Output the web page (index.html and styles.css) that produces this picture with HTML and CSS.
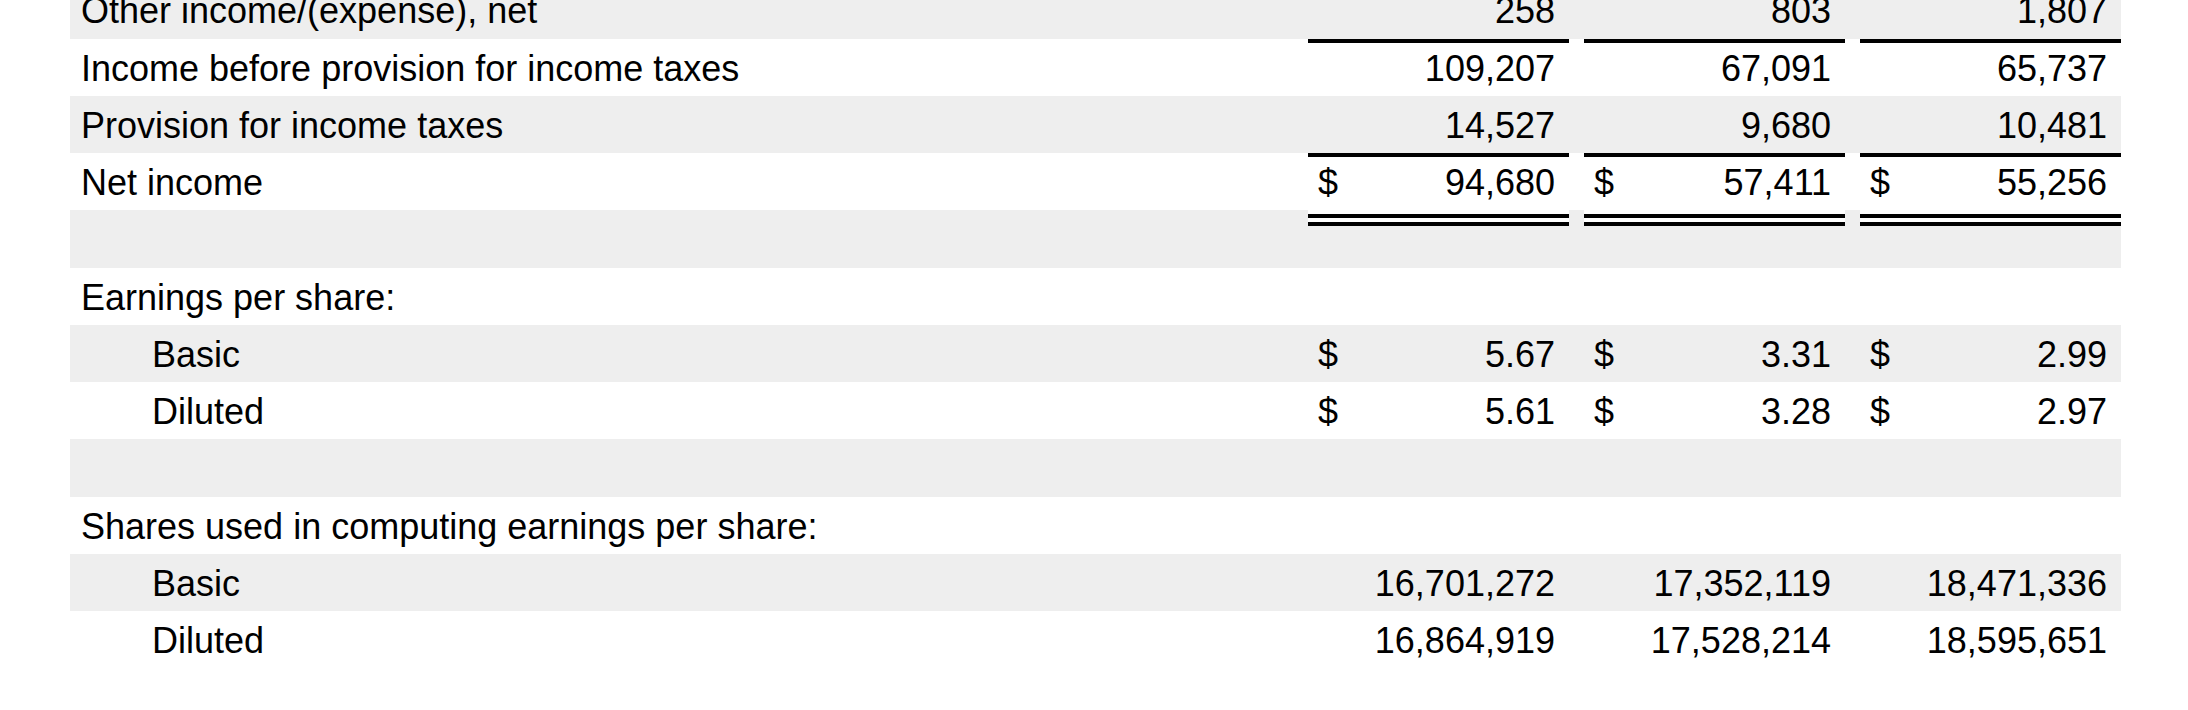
FILE: index.html
```html
<!DOCTYPE html>
<html lang="en">
<head>
<meta charset="utf-8">
<title>Income statement</title>
<link rel="stylesheet" href="styles.css">
</head>
<body>
<div class="table">
  <div class="row shade">
    <div class="label">Other income/(expense), net</div>
    <div class="val"><span></span><span>258</span></div>
    <div class="val"><span></span><span>803</span></div>
    <div class="val"><span></span><span>1,807</span></div>
  </div>
  <div class="row">
    <div class="label">Income before provision for income taxes</div>
    <div class="val rule"><span></span><span>109,207</span></div>
    <div class="val rule"><span></span><span>67,091</span></div>
    <div class="val rule"><span></span><span>65,737</span></div>
  </div>
  <div class="row shade">
    <div class="label">Provision for income taxes</div>
    <div class="val"><span></span><span>14,527</span></div>
    <div class="val"><span></span><span>9,680</span></div>
    <div class="val"><span></span><span>10,481</span></div>
  </div>
  <div class="row">
    <div class="label">Net income</div>
    <div class="val rule dbl"><span>$</span><span>94,680</span></div>
    <div class="val rule dbl"><span>$</span><span>57,411</span></div>
    <div class="val rule dbl"><span>$</span><span>55,256</span></div>
  </div>
  <div class="row shade">
    <div class="label"></div>
  </div>
  <div class="row">
    <div class="label">Earnings per share:</div>
  </div>
  <div class="row shade">
    <div class="label indent">Basic</div>
    <div class="val"><span>$</span><span>5.67</span></div>
    <div class="val"><span>$</span><span>3.31</span></div>
    <div class="val"><span>$</span><span>2.99</span></div>
  </div>
  <div class="row">
    <div class="label indent">Diluted</div>
    <div class="val"><span>$</span><span>5.61</span></div>
    <div class="val"><span>$</span><span>3.28</span></div>
    <div class="val"><span>$</span><span>2.97</span></div>
  </div>
  <div class="row shade">
    <div class="label"></div>
  </div>
  <div class="row">
    <div class="label">Shares used in computing earnings per share:</div>
  </div>
  <div class="row shade">
    <div class="label indent">Basic</div>
    <div class="val"><span></span><span>16,701,272</span></div>
    <div class="val"><span></span><span>17,352,119</span></div>
    <div class="val"><span></span><span>18,471,336</span></div>
  </div>
  <div class="row">
    <div class="label indent">Diluted</div>
    <div class="val"><span></span><span>16,864,919</span></div>
    <div class="val"><span></span><span>17,528,214</span></div>
    <div class="val"><span></span><span>18,595,651</span></div>
  </div>
</div>
</body>
</html>
```
FILE: styles.css
```css
html, body {
  margin: 0;
  padding: 0;
  background: #ffffff;
}

body {
  font-family: "Liberation Sans", Arial, Helvetica, sans-serif;
  font-size: 36px;
  color: #000000;
  overflow: hidden;
}

.table {
  width: 2051px;
  margin: -18.75px 0 0 70px;
}

.row {
  display: grid;
  grid-template-columns: 1fr 261px 276px 276px;
  height: 57.25px;
}

.row.shade {
  background: #eeeeee;
}

.label,
.val {
  box-sizing: border-box;
  padding-top: 4px;
  line-height: 51.25px;
  white-space: nowrap;
}

.label {
  padding-left: 11px;
}

.label.indent {
  padding-left: 82px;
}

.val {
  display: flex;
  justify-content: space-between;
  padding-left: 10px;
  padding-right: 14px;
}

.val + .val {
  margin-left: 15px;
}

.val.rule {
  padding-top: 0;
  border-top: 4px solid #000000;
}

.val.dbl {
  position: relative;
  z-index: 1;
  height: calc(100% + 6px);
  background: #ffffff;
  border-bottom: 12px double #000000;
}
```
